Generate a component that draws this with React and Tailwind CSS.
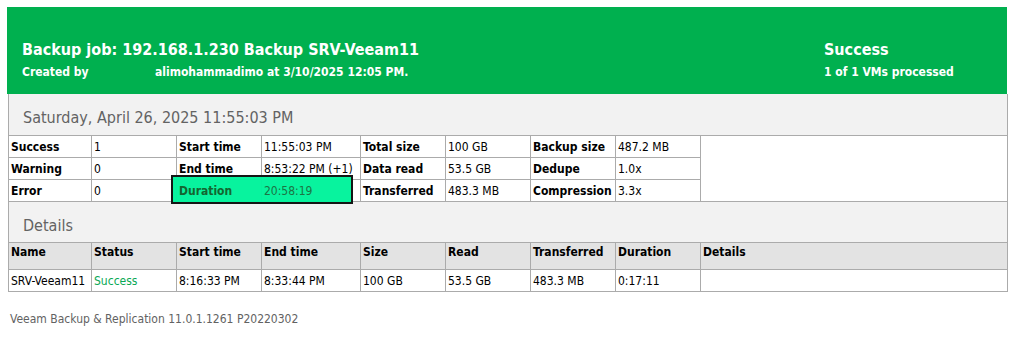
import React from "react";

const FONT = { fontFamily: '"DejaVu Sans Condensed", "Liberation Sans", sans-serif' };

const summaryRows = [
  ["Success", "1", "Start time", "11:55:03 PM", "Total size", "100 GB", "Backup size", "487.2 MB"],
  ["Warning", "0", "End time", "8:53:22 PM (+1)", "Data read", "53.5 GB", "Dedupe", "1.0x"],
  ["Error", "0", "Duration", "20:58:19", "Transferred", "483.3 MB", "Compression", "3.3x"],
];

const detailHead = ["Name", "Status", "Start time", "End time", "Size", "Read", "Transferred", "Duration", "Details"];
const detailRow = ["SRV-Veeam11", "Success", "8:16:33 PM", "8:33:44 PM", "100 GB", "53.5 GB", "483.3 MB", "0:17:11", ""];

const COLS = "grid-cols-[83px_85px_85px_99px_85px_85px_85px_85px_1fr]";

export default function App() {
  return (
    <div className="w-[1013px] h-[343px] bg-white text-black overflow-hidden" style={FONT}>
      <div className="ml-[8px] pt-[7px] w-[1000px]">
        {/* job header */}
        <div className="-ml-px w-[1000px] h-[87px] bg-[#00b04f] text-white flex">
          <div className="flex-1 pl-[15px] pt-[33px]">
            <div className="text-[16px] leading-[20px] font-bold">Backup job: 192.168.1.230 Backup SRV-Veeam11</div>
            <div className="mt-[5px] flex text-[12px] leading-[15px] font-bold">
              <span className="w-[133px]">Created by</span>
              <span>alimohammadimo at 3/10/2025 12:05 PM.</span>
            </div>
          </div>
          <div className="w-[183px] pt-[33px]">
            <div className="text-[16px] leading-[20px] font-bold">Success</div>
            <div className="mt-[5px] text-[12px] leading-[15px] font-bold">1 of 1 VMs processed</div>
          </div>
        </div>

        {/* report body */}
        <div className="border-x border-[#ababab] bg-[#f2f2f2]">
          <div className="h-[41px] pl-[14px] pt-[14px] text-[16px] leading-[20px] text-[#636363]">
            Saturday, April 26, 2025 11:55:03 PM
          </div>

          <div className="relative">
            <div className={`grid ${COLS} grid-rows-[22px_22px_22px] border-t border-[#ababab] text-[12px]`}>
              {summaryRows.map((row, r) =>
                row.map((cell, c) => {
                  const isLabel = c % 2 === 0;
                  const hi = r === 2 && (c === 2 || c === 3);
                  return (
                    <div
                      key={`${r}-${c}`}
                      className={`bg-white border-b border-r border-[#ababab] px-[2px] flex items-center whitespace-nowrap ${isLabel ? "font-bold" : ""}`}
                    >
                      <span
                        className={
                          hi
                            ? c === 2
                              ? "relative z-20 text-[#146530]"
                              : "relative z-20 text-[#1c7444]"
                            : ""
                        }
                      >
                        {cell}
                      </span>
                    </div>
                  );
                })
              )}
              <div className="bg-white border-b border-[#ababab] col-start-9 row-start-1 row-span-3" />
            </div>
            {/* highlight box around duration */}
            <div className="absolute z-10 left-[162px] top-[40px] w-[182px] h-[29px] bg-[#00f39b]/[0.97] border-2 border-[#151515]" />
          </div>

          <div className="h-[40px] pl-[14px] pt-[14px] text-[16px] leading-[20px] text-[#636363]">Details</div>

          <div className={`grid ${COLS} border-t border-[#ababab] text-[12px]`}>
            {detailHead.map((h, i) => (
              <div
                key={h}
                className={`h-[27px] bg-[#e3e3e3] border-b border-[#ababab] ${i < 8 ? "border-r" : ""} px-[2px] pt-[2px] leading-[15px] font-bold whitespace-nowrap`}
              >
                {h}
              </div>
            ))}
            {detailRow.map((d, i) => (
              <div
                key={i}
                className={`h-[22px] bg-white border-b border-[#ababab] ${i < 8 ? "border-r" : ""} px-[2px] flex items-center whitespace-nowrap ${i === 1 ? "text-[#0aa855]" : ""}`}
              >
                {d}
              </div>
            ))}
          </div>
        </div>
      </div>

      <div className="pl-[10px] pt-[20px] text-[12px] leading-[15px] text-[#626262]">
        Veeam Backup &amp; Replication 11.0.1.1261 P20220302
      </div>
    </div>
  );
}
